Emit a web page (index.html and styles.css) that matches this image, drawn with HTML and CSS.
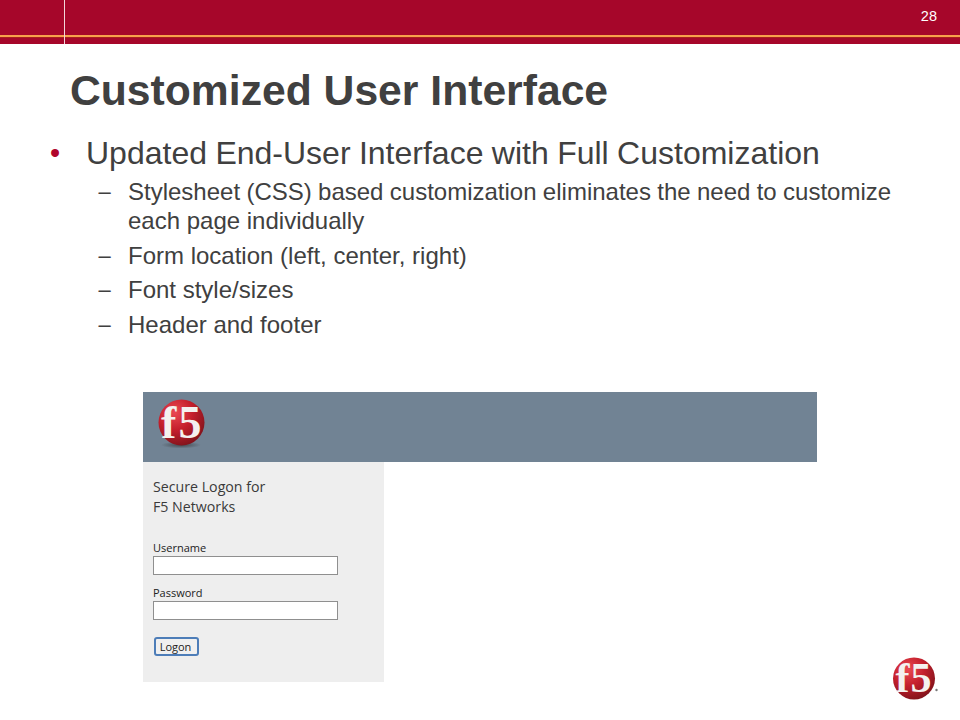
FILE: index.html
```html
<!DOCTYPE html>
<html lang="en">
<head>
<meta charset="utf-8">
<title>Customized User Interface</title>
<link rel="stylesheet" href="styles.css">
</head>
<body>
<svg class="defs" width="0" height="0" aria-hidden="true">
  <defs>
    <radialGradient id="ball" cx="0.36" cy="0.28" r="0.85">
      <stop offset="0" stop-color="#ea4a52"/>
      <stop offset="0.45" stop-color="#c41f2c"/>
      <stop offset="1" stop-color="#701018"/>
    </radialGradient>
    <radialGradient id="shadow" cx="0.5" cy="0.5" r="0.5">
      <stop offset="0" stop-color="#2a2a2a" stop-opacity="0.65"/>
      <stop offset="1" stop-color="#2a2a2a" stop-opacity="0"/>
    </radialGradient>
  </defs>
</svg>
<div class="slide">
  <header class="band">
    <div class="band-rule"></div>
    <div class="band-tick"></div>
    <span class="page-no">28</span>
  </header>
  <h1 class="title">Customized User Interface</h1>
  <ul class="points">
    <li class="point">
      <span class="point-text">Updated End-User Interface with Full Customization</span>
      <ul class="subs">
        <li class="sub"><span class="sub-line">Stylesheet (CSS) based customization eliminates the need to customize</span><br>each page individually</li>
        <li class="sub">Form location (left, center, right)</li>
        <li class="sub">Font style/sizes</li>
        <li class="sub">Header and footer</li>
      </ul>
    </li>
  </ul>
  <section class="shot">
    <div class="shot-head">
      <svg class="logo-large" viewBox="-4 -4 58 58" role="img" aria-label="f5">
        <ellipse cx="25" cy="46" rx="20" ry="3.500" fill="url(#shadow)"/>
        <circle cx="25.500" cy="23.500" r="23" fill="url(#ball)"/>
        <text class="logo-f" x="5" y="39" font-size="46">f</text>
        <text class="logo-5" x="22.500" y="39" font-size="46">5</text>
      </svg>
    </div>
    <div class="form-panel">
      <p class="form-title">Secure Logon for<br>F5 Networks</p>
      <label class="field-label" for="u">Username</label>
      <input class="field" id="u" type="text">
      <label class="field-label field-label-second" for="p">Password</label>
      <input class="field" id="p" type="password">
      <button class="logon" type="button">Logon</button>
    </div>
  </section>
  <footer class="foot">
    <svg class="logo-small" viewBox="-4 -4 54 54" role="img" aria-label="f5">
      <circle cx="22" cy="21.500" r="21" fill="url(#ball)"/>
      <text class="logo-f" x="3.500" y="35" font-size="42">f</text>
      <text class="logo-5" x="18.500" y="35" font-size="42">5</text>
      <circle cx="44.500" cy="33" r="1.200" fill="#777"/>
    </svg>
  </footer>
</div>
</body>
</html>
```

FILE: styles.css
```css
html, body {
  margin: 0;
  padding: 0;
  background: #fff;
}
.defs {
  position: absolute;
}
.slide {
  width: 960px;
  height: 720px;
  overflow: hidden;
  display: flex;
  flex-direction: column;
  font-family: "Liberation Sans", Arial, sans-serif;
  color: #404040;
}
.band {
  position: relative;
  flex: none;
  height: 44px;
  background: #a6062a;
}
.band-rule {
  position: absolute;
  left: 0;
  right: 0;
  top: 35px;
  height: 2px;
  background: #f8a04c;
  border-bottom: 1px solid #a8201c;
}
.band-tick {
  position: absolute;
  left: 64px;
  top: 0;
  width: 1px;
  height: 44px;
  background: #f3d5da;
}
.page-no {
  position: absolute;
  right: 23px;
  top: 8px;
  font-size: 14.500px;
  line-height: 16px;
  color: #fff;
}
.title {
  margin: 22px 0 0 70px;
  font-size: 42.670px;
  line-height: 48px;
  font-weight: 700;
  color: #404040;
}
.points {
  list-style: none;
  margin: 21px 0 0;
  padding: 0;
}
.point {
  position: relative;
  padding-left: 86px;
  font-size: 32px;
  line-height: 36px;
}
.point-text {
  word-spacing: -0.500px;
}
.point::before {
  content: "•";
  position: absolute;
  left: 50px;
  top: 0;
  font-size: 29px;
  color: #b0062c;
}
.subs {
  list-style: none;
  margin: 6px 0 0;
  padding: 0;
}
.sub {
  position: relative;
  margin-left: 42px;
  margin-bottom: 5.500px;
  font-size: 24px;
  line-height: 29px;
}
.sub-line {
  word-spacing: -0.330px;
}
.sub::before {
  content: "–";
  position: absolute;
  left: -29.500px;
  top: 0;
  font-size: 22px;
}
.shot {
  flex: none;
  margin: 48px 0 0 143px;
  width: 674px;
  height: 290px;
}
.shot-head {
  height: 70px;
  background: #718394;
  padding: 3px 0 0 9px;
  box-sizing: border-box;
}
.logo-large {
  display: block;
  width: 58px;
  height: 58px;
}
.logo-f, .logo-5 {
  font-family: "Liberation Serif", serif;
  font-weight: 700;
  fill: #f4f1ef;
}
.form-panel {
  width: 241px;
  height: 220px;
  background: #eeeeee;
  padding: 15px 0 0 10px;
  box-sizing: border-box;
  font-family: "Open Sans", sans-serif;
  color: #3a3a3a;
}
.form-title {
  margin: 0 0 23px;
  font-size: 14.200px;
  line-height: 20px;
}
.field-label {
  display: block;
  font-size: 11px;
  line-height: 15px;
  color: #222;
}
.field-label-second {
  margin-top: 10px;
}
.field {
  display: block;
  box-sizing: border-box;
  width: 185px;
  height: 19px;
  margin: 1px 0 0;
  padding: 0;
  border: 1px solid #8f8f8f;
  border-radius: 0;
  background: #fff;
}
.logon {
  display: block;
  box-sizing: border-box;
  width: 45px;
  height: 19px;
  margin: 17px 0 0 1px;
  padding: 0 2px 0 0;
  border: 2px solid #4d7db8;
  border-radius: 3px;
  background: #f0f0f0;
  font-family: "Open Sans", sans-serif;
  font-size: 11px;
  line-height: 14px;
  color: #222;
}
.foot {
  position: absolute;
  left: 888px;
  top: 653px;
}
.logo-small {
  display: block;
  width: 54px;
  height: 54px;
}
```
